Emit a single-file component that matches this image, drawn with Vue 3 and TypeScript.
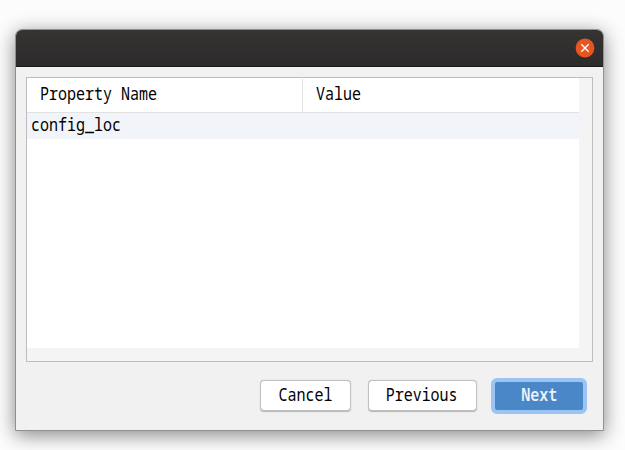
<script setup lang="ts">
const buttons: { label: string; kind: string }[] = [
  { label: 'Cancel', kind: 'cancel' },
  { label: 'Previous', kind: 'previous' },
  { label: 'Next', kind: 'primary' },
]
const columns = ['Property Name', 'Value']
</script>

<template>
  <main class="desktop">
    <section class="window">
      <header class="titlebar">
        <button class="close" aria-label="Close">
          <svg width="20" height="20" viewBox="0 0 20 20">
            <circle cx="10" cy="10" r="9.4" fill="#e95420" />
            <path d="M6.3 6.3L13.7 13.7M13.7 6.3L6.3 13.7" stroke="#fff" stroke-width="1.4" fill="none" />
          </svg>
        </button>
      </header>
      <div class="content">
        <div class="table">
          <div class="viewport">
            <div class="head">
              <div v-for="c in columns" :key="c" class="th"><span class="txt">{{ c }}</span></div>
            </div>
            <div class="row"><span class="txt">config_loc</span></div>
          </div>
        </div>
        <footer class="actions">
          <button v-for="b in buttons" :key="b.label" class="btn" :class="b.kind"><span class="txt">{{ b.label }}</span></button>
        </footer>
      </div>
    </section>
  </main>
</template>

<style>
html, body { margin: 0; background: #fcfcfc; }
</style>
<style scoped>
* { box-sizing: border-box; }
.desktop { width: 625px; height: 450px; padding: 29px 21px 19px 15px; background: #fcfcfc; overflow: hidden; }
.window { width: 589px; height: 402px; border: 1px solid #919191; border-radius: 7px 7px 0 0; background: #f1f1f1; box-shadow: 0 4px 19px rgba(0, 0, 0, .48); overflow: hidden; }
.titlebar { height: 37px; display: flex; align-items: center; justify-content: flex-end; padding-right: 8px; background: linear-gradient(#353432, #2c2a2b); border-bottom: 1px solid #1b1819; }
.close { width: 20px; height: 20px; padding: 0; border: 0; background: none; }
.close svg { display: block; }
.content { padding: 10px; }
.table { width: 567px; height: 285px; border: 1px solid #bdbdbd; background: #f4f4f4; }
.viewport { width: 552px; height: 270px; background: #fff; }
.head { height: 35px; display: flex; border-bottom: 1px solid #e2e2e2; }
.th { width: 276px; height: 33px; margin-top: 1px; padding: 1px 0 0 12.6px; border-right: 1px solid #e2e2e2; }
.th:last-child { border-right: 0; }
.row { height: 26px; padding: 0 4px; background: #f1f5fa; }
.row .txt { line-height: 21px; }
.txt { display: block; width: max-content; font: 18.6px/25px "Noto Sans Mono", "Liberation Mono", monospace; color: #000; white-space: pre; transform: scaleX(.8065); transform-origin: 0 50%; }
.actions { display: flex; align-items: center; justify-content: flex-end; height: 68px; padding-right: 6px; }
.btn { display: flex; align-items: center; justify-content: center; width: 91px; height: 31px; margin-bottom: 1px; padding: 0 0 4px; border: 1px solid #c0c0c0; border-radius: 4px; background: #fff; box-shadow: 0 .5px 1px rgba(0, 0, 0, .25); }
.btn .txt { transform-origin: 50% 50%; }
.cancel .txt { margin-right: 1px; }
.previous { width: 109px; margin: 0 14.5px 1px 16.5px; }
.primary { width: 96px; height: 36px; margin-bottom: 0; padding-bottom: 6px; border: 4px solid #9bc4f4; border-radius: 6px; background: #4a87c7; box-shadow: none; }
.primary .txt { color: #eef3f8; font-weight: 600; }
</style>
